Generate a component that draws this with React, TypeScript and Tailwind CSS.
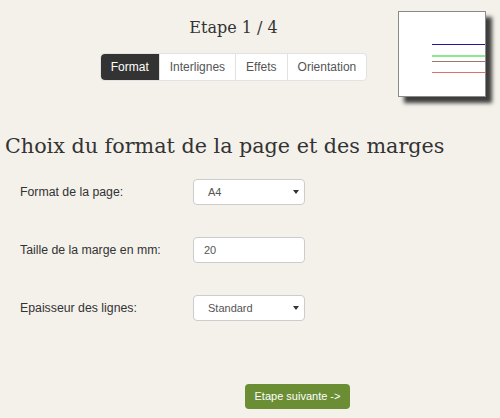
const tabs = ["Format", "Interlignes", "Effets", "Orientation"];

const Caret = () => (
  <svg width="6" height="4" viewBox="0 0 6 4" className="fill-[#333]">
    <path d="M0 0 H6 L3 4 Z" />
  </svg>
);

const PagePreview = () => (
  <div className="absolute left-[398px] top-[11px] h-[86px] w-[88px] border border-[#8a8a8a] bg-white shadow-[6px_6px_4px_rgba(0,0,0,0.75)]">
    <div className="absolute left-[33px] right-0 top-[32px] h-px bg-[#1a1a9a]" />
    <div className="absolute left-[33px] right-0 top-[43px] h-[2px] bg-[#8fe88f]" />
    <div className="absolute left-[33px] right-0 top-[49px] h-px bg-[#9a7a6a]" />
    <div className="absolute left-[33px] right-0 top-[60px] h-px bg-[#e07070]" />
  </div>
);

const App = () => {
  return (
    <div className="relative h-[418px] w-[500px] overflow-hidden bg-[#f4f1eb] font-['Liberation_Sans',Arial,sans-serif]">
      <PagePreview />
      <div className="flex w-[467px] flex-col items-center pt-[17px]">
        <h2 className="font-['DejaVu_Serif',serif] text-[16px] leading-[22px] text-[#333]">Etape 1 / 4</h2>
        <div className="mt-[14px] flex h-[28px] rounded border border-[#e2e2e2] bg-white text-[12px]">
          {tabs.map((t, i) => (
            <div
              key={t}
              className={
                i === 0
                  ? "flex items-center rounded-l bg-[#333] px-[10px] text-white"
                  : "flex items-center border-l border-[#e2e2e2] px-[10px] text-[#555]"
              }
            >
              {t}
            </div>
          ))}
        </div>
      </div>

      <h1 className="mt-[52px] pl-[5px] font-['DejaVu_Serif',serif] text-[20.7px] leading-[26px] text-[#333]">
        Choix du format de la page et des marges
      </h1>

      <div className="mt-[20px] flex flex-col gap-[32px] pl-[20px] text-[12.3px] text-[#333]">
        <div className="flex items-center">
          <label className="w-[173px]">Format de la page:</label>
          <div className="flex h-[26px] w-[112px] items-center justify-between rounded border border-[#ccc] bg-white pl-[14px] pr-[5px] text-[11px] text-[#555]">
            <span>A4</span>
            <Caret />
          </div>
        </div>
        <div className="flex items-center">
          <label className="w-[173px]">Taille de la marge en mm:</label>
          <div className="flex h-[26px] w-[112px] items-center rounded border border-[#ccc] bg-white pl-[10px] text-[11px] text-[#555]">
            20
          </div>
        </div>
        <div className="flex items-center">
          <label className="w-[173px]">Epaisseur des lignes:</label>
          <div className="flex h-[26px] w-[112px] items-center justify-between rounded border border-[#ccc] bg-white pl-[14px] pr-[5px] text-[11px] text-[#555]">
            <span>Standard</span>
            <Caret />
          </div>
        </div>
      </div>

      <div className="mt-[63px] pl-[245px]">
        <button className="flex h-[25px] w-[105px] items-center justify-center rounded bg-[#6b8e35] text-[11px] text-white">
          Etape suivante -&gt;
        </button>
      </div>
    </div>
  );
};

export default App;
